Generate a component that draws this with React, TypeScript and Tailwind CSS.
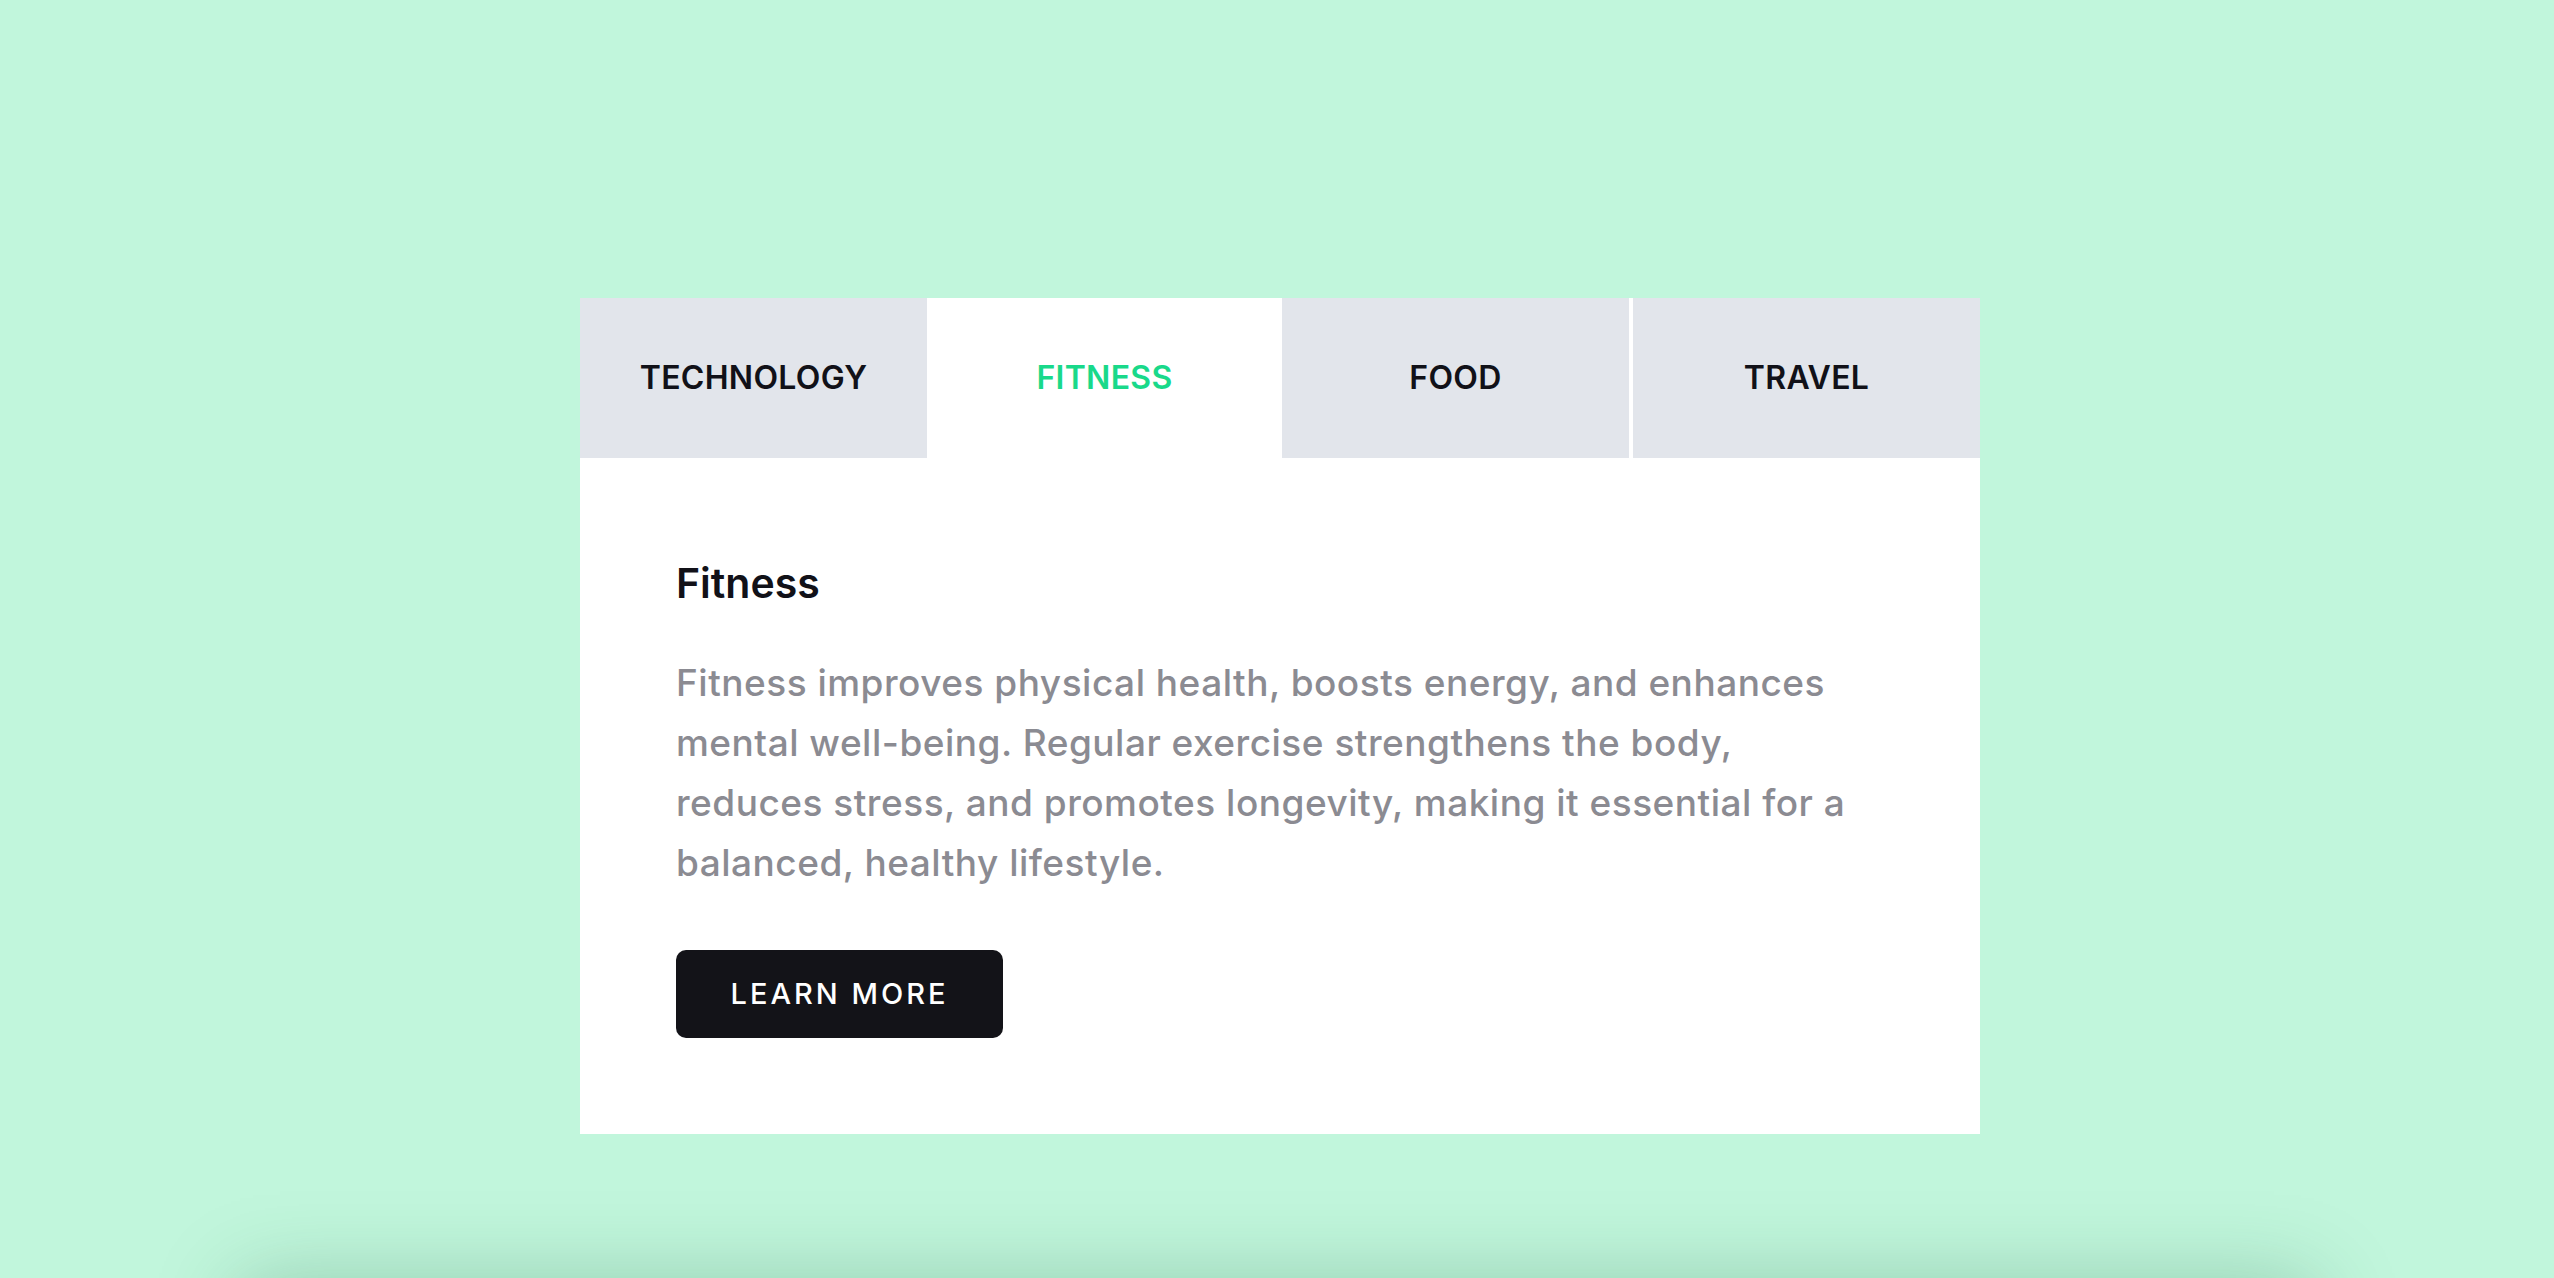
import React, { useState } from 'react';

const tabs = [
  {
    id: 'technology',
    label: 'TECHNOLOGY',
    title: 'Technology',
    body: 'Technology drives innovation, connects people across the world, and shapes the way we work, learn and communicate every single day.',
  },
  {
    id: 'fitness',
    label: 'FITNESS',
    title: 'Fitness',
    body: 'Fitness improves physical health, boosts energy, and enhances mental well-being. Regular exercise strengthens the body, reduces stress, and promotes longevity, making it essential for a balanced, healthy lifestyle.',
  },
  {
    id: 'food',
    label: 'FOOD',
    title: 'Food',
    body: 'Food brings people together, fuels the body, and reflects culture and tradition through flavours, recipes and shared meals.',
  },
  {
    id: 'travel',
    label: 'TRAVEL',
    title: 'Travel',
    body: 'Travel opens the mind to new places, cultures and experiences, creating memories that last a lifetime.',
  },
];

const font = "font-['Inter','Noto_Sans',sans-serif]";

const App: React.FC = () => {
  const [active, setActive] = useState('fitness');
  const current = tabs.find((t) => t.id === active) ?? tabs[1];

  return (
    <div className={`min-h-screen bg-[#c1f6dc] ${font} overflow-hidden`}>
      <section className="h-screen flex justify-center pl-[6px] pt-[298px]">
        <div className="w-[1400px] h-[836px] bg-white flex flex-col">
          {/* tabs */}
          <div className="flex gap-[4px] h-[160px]">
            {tabs.map((tab) => {
              const isActive = tab.id === active;
              return (
                <button
                  key={tab.id}
                  onClick={() => setActive(tab.id)}
                  className={`flex-1 flex items-center justify-center text-[32px] font-semibold tracking-[0.3px] ${
                    isActive ? 'bg-white text-[#19d98a]' : 'bg-[#e2e5eb] text-[#111118]'
                  }`}
                >
                  {tab.label}
                </button>
              );
            })}
          </div>

          {/* content */}
          <div className="pl-[96px] pr-[96px] pt-[101px]">
            <h2 className="text-[41px] leading-[49px] font-semibold text-[#111118]">{current.title}</h2>
            <p className="mt-[45px] max-w-[1200px] text-[37px] leading-[60px] font-medium tracking-[0.5px] text-[#8b8b92]">
              {current.body}
            </p>
            <button className="mt-[57px] w-[327px] h-[88px] rounded-[10px] bg-[#131318] text-white text-[29px] font-medium tracking-[3px]">
              LEARN MORE
            </button>
          </div>
        </div>
      </section>
      <div className="mx-[250px] mt-[14px] h-[300px] bg-[#c1f6dc] shadow-[0_0_80px_10px_rgba(20,90,55,0.28)]" />
    </div>
  );
};

export default App;
